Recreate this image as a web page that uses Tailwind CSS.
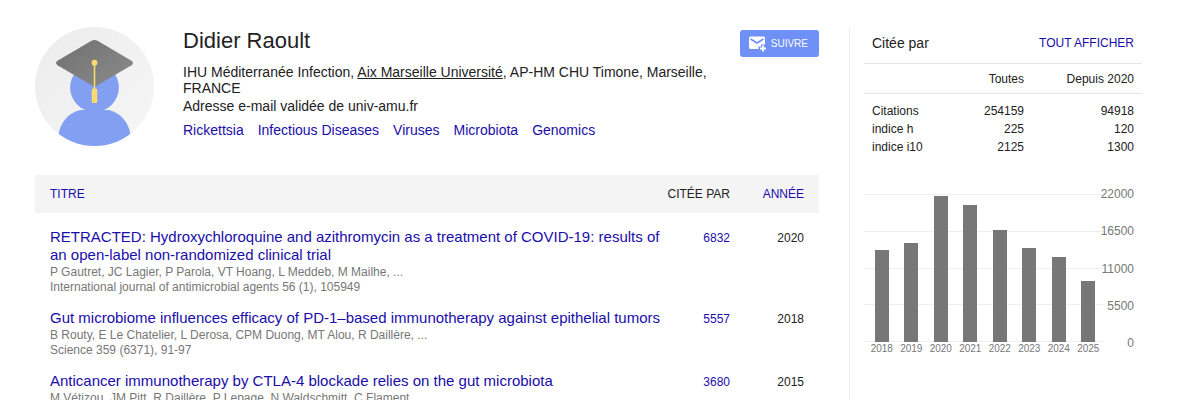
<!DOCTYPE html>
<html lang="fr">
<head>
    <meta charset="UTF-8">
    <meta name="viewport" content="width=device-width, initial-scale=1.0">
    <title>Didier Raoult</title>
    <script src="https://cdn.jsdelivr.net/npm/@tailwindcss/browser@4"></script>
    <style>
        body {
            font-family: "Liberation Sans", Arial, sans-serif;
        }
    </style>
</head>
<body class="h-screen overflow-hidden bg-white text-[#222]">
    <div class="flex gap-[30px] pt-[27px] pl-[35px] pr-[57px]">
        <main class="min-w-0 flex-1">
            <!-- Profile -->
            <section class="flex h-[148px] items-start">
                <svg class="size-[119px] shrink-0" viewBox="0 0 119 119" role="img" aria-label="Photo de profil">
                    <defs>
                        <clipPath id="disc"><circle cx="59.5" cy="59.5" r="59.5"/></clipPath>
                        <linearGradient id="disc-fill" x1="0" y1="0" x2="1" y2="1">
                            <stop offset="0" stop-color="#ececec"/>
                            <stop offset="1" stop-color="#f6f6f6"/>
                        </linearGradient>
                        <linearGradient id="cap-fill" x1="0" y1="0" x2="1" y2="1">
                            <stop offset="0" stop-color="#707070"/>
                            <stop offset="1" stop-color="#8c8c8c"/>
                        </linearGradient>
                    </defs>
                    <g clip-path="url(#disc)">
                        <rect width="119" height="119" fill="url(#disc-fill)"/>
                        <circle cx="59.5" cy="60.5" r="24.4" fill="#829ff1"/>
                        <path d="M23.5 119V108C25 96 33 86 45 83H74C86 86 94 96 95.5 108V119Z" fill="#829ff1"/>
                        <path d="M56.5 13.7Q59.5 12.2 62.5 13.7L96.5 33.8Q99.5 36 96.5 38.2L59.5 60L22.5 38.2Q19.5 36 22.5 33.8Z" fill="url(#cap-fill)"/>
                        <circle cx="59.5" cy="35.7" r="2.9" fill="#fbdb71"/>
                        <path d="M59.5 36V64" stroke="#fbdb71" stroke-width="1.6"/>
                        <rect x="56.7" y="61.5" width="5.6" height="14.5" rx="1.5" fill="#fbdb71"/>
                    </g>
                </svg>
                <div class="min-w-0 flex-1 pt-px pl-[29px]">
                    <div class="flex items-start justify-between">
                        <h1 class="text-[22px] leading-[26px]">Didier Raoult</h1>
                        <button type="button" class="mt-0.5 -mb-1 flex h-[27px] items-center rounded-[3px] bg-[#6e90f7] pr-[11px] pl-[9px] text-[10px] text-white">
                            <svg class="mr-[5px] size-[17px]" viewBox="0 0 17 17" aria-hidden="true">
                                <path d="M1.5 1.5H14.5Q16 1.5 16 3V9.5H12V11.5H9.5V14H1.5Q0 14 0 12.5V3Q0 1.5 1.5 1.5Z" fill="#fff"/>
                                <path d="M1.5 4L8 8L14.5 4" fill="none" stroke="#6e90f7" stroke-width="1.5"/>
                                <path d="M14 10.500V16.500M11 13.500H17" stroke="#fff" stroke-width="2"/>
                            </svg>
                            SUIVRE
                        </button>
                    </div>
                    <p class="mt-2.5 w-[530px] max-w-full text-sm leading-4">IHU Méditerranée Infection, <a href="#" class="underline">Aix Marseille Université</a>, AP-HM CHU Timone, Marseille, FRANCE</p>
                    <p class="mt-0.5 text-sm leading-4">Adresse e-mail validée de univ-amu.fr</p>
                    <nav class="mt-2 flex gap-3.5 text-sm leading-4 text-[#1a0dab]">
                        <a href="#">Rickettsia</a>
                        <a href="#">Infectious Diseases</a>
                        <a href="#">Viruses</a>
                        <a href="#">Microbiota</a>
                        <a href="#">Genomics</a>
                    </nav>
                </div>
            </section>

            <!-- Publications -->
            <table class="w-full table-fixed text-xs">
                <thead>
                    <tr class="h-[38px] bg-[#f4f4f4]">
                        <th class="pl-[15px] text-left font-normal"><a href="#" class="text-[#1a0dab]">TITRE</a></th>
                        <th class="w-[64px] text-right font-normal">CITÉE PAR</th>
                        <th class="w-[89px] pr-[15px] text-right font-normal"><a href="#" class="text-[#1a0dab]">ANNÉE</a></th>
                    </tr>
                </thead>
                <tbody class="align-top before:block before:h-px">
                    <tr>
                        <td class="pt-3.5 pl-[15px] leading-[15px] text-[#777]">
                            <a href="#" class="mb-px block text-[15px] leading-[18px] text-[#1a0dab]">RETRACTED: Hydroxychloroquine and azithromycin as a treatment of COVID-19: results of an open-label non-randomized clinical trial</a>
                            <div>P Gautret, JC Lagier, P Parola, VT Hoang, L Meddeb, M Mailhe, ...</div>
                            <div>International journal of antimicrobial agents 56 (1), 105949</div>
                        </td>
                        <td class="pt-4 text-right"><a href="#" class="text-[#1a0dab]">6832</a></td>
                        <td class="pt-4 pr-[15px] text-right">2020</td>
                    </tr>
                    <tr>
                        <td class="pt-3.5 pl-[15px] leading-[15px] text-[#777]">
                            <a href="#" class="mb-px block text-[15px] leading-[18px] text-[#1a0dab]">Gut microbiome influences efficacy of PD-1–based immunotherapy against epithelial tumors</a>
                            <div>B Routy, E Le Chatelier, L Derosa, CPM Duong, MT Alou, R Daillère, ...</div>
                            <div>Science 359 (6371), 91-97</div>
                        </td>
                        <td class="pt-4 text-right"><a href="#" class="text-[#1a0dab]">5557</a></td>
                        <td class="pt-4 pr-[15px] text-right">2018</td>
                    </tr>
                    <tr>
                        <td class="pt-3.5 pl-[15px] leading-[15px] text-[#777]">
                            <a href="#" class="mb-px block text-[15px] leading-[18px] text-[#1a0dab]">Anticancer immunotherapy by CTLA-4 blockade relies on the gut microbiota</a>
                            <div>M Vétizou, JM Pitt, R Daillère, P Lepage, N Waldschmitt, C Flament, ...</div>
                        </td>
                        <td class="pt-4 text-right"><a href="#" class="text-[#1a0dab]">3680</a></td>
                        <td class="pt-4 pr-[15px] text-right">2015</td>
                    </tr>
                </tbody>
            </table>
        </main>

        <aside class="w-[293px] shrink-0 border-l border-[#eee] pl-[14px]">
            <!-- Citation metrics -->
            <div class="flex h-9 items-center justify-between px-2 pb-1">
                <h2 class="text-sm">Citée par</h2>
                <a href="#" class="text-xs text-[#1a0dab]">TOUT AFFICHER</a>
            </div>
            <table class="w-full table-fixed text-xs">
                <thead>
                    <tr class="h-[30px] border-y border-[#e5e5e5]">
                        <th class="w-[80px]"></th>
                        <th class="text-right font-normal">Toutes</th>
                        <th class="w-[118px] pr-2 text-right font-normal">Depuis 2020</th>
                    </tr>
                </thead>
                <tbody class="leading-[18px] before:block before:h-2">
                    <tr>
                        <td class="pl-2">Citations</td>
                        <td class="text-right">254159</td>
                        <td class="pr-2 text-right">94918</td>
                    </tr>
                    <tr>
                        <td class="pl-2">indice h</td>
                        <td class="text-right">225</td>
                        <td class="pr-2 text-right">120</td>
                    </tr>
                    <tr>
                        <td class="pl-2">indice i10</td>
                        <td class="text-right">2125</td>
                        <td class="pr-2 text-right">1300</td>
                    </tr>
                </tbody>
            </table>

            <!-- Citations per year -->
            <div class="mt-[38px] flex pr-2 text-[#777]">
                <div class="flex-1">
                    <div class="relative h-[148px]">
                        <div class="absolute inset-0 flex flex-col justify-between">
                            <div class="h-px bg-[#eee]"></div>
                            <div class="h-px bg-[#eee]"></div>
                            <div class="h-px bg-[#eee]"></div>
                            <div class="h-px bg-[#eee]"></div>
                            <div class="h-px bg-[#eee]"></div>
                        </div>
                        <div id="bars" class="relative grid h-full grid-cols-8 items-end justify-items-center pl-[3px]"></div>
                    </div>
                    <div id="years" class="mt-px grid grid-cols-8 justify-items-center pl-[3px] text-[10px] leading-3"></div>
                </div>
                <div class="-my-2 flex h-[165px] w-[31px] flex-col items-end justify-between text-xs leading-4">
                    <span>22000</span>
                    <span>16500</span>
                    <span>11000</span>
                    <span>5500</span>
                    <span>0</span>
                </div>
            </div>
        </aside>
    </div>

    <script>
        const citations = {
            2018: 13650,
            2019: 14700,
            2020: 21750,
            2021: 20350,
            2022: 16700,
            2023: 13950,
            2024: 12600,
            2025: 9050
        };
        const maxCitations = 22000;

        const barsDiv = document.getElementById('bars');
        const yearsDiv = document.getElementById('years');
        for (const year in citations) {
            const bar = document.createElement('div');
            bar.className = 'w-[14px] bg-[#777]';
            bar.style.height = `${citations[year] / maxCitations * 100}%`;
            barsDiv.appendChild(bar);

            const label = document.createElement('span');
            label.textContent = year;
            yearsDiv.appendChild(label);
        }
    </script>
</body>
</html>
